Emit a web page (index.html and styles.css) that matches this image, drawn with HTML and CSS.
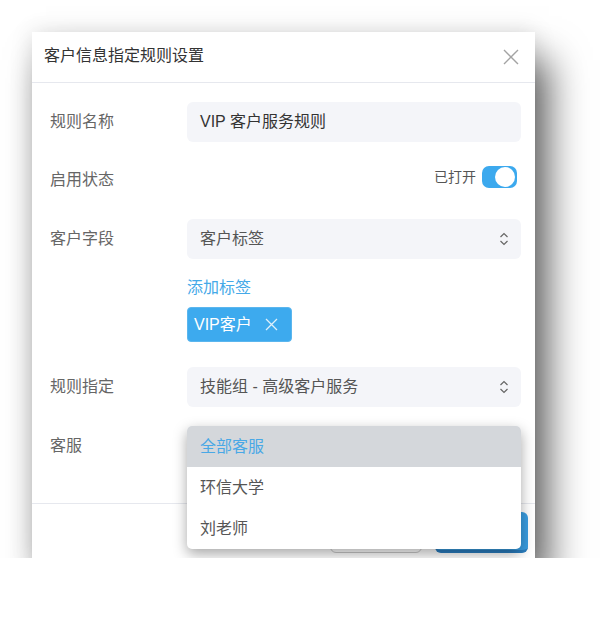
FILE: index.html
```html
<!DOCTYPE html>
<html lang="zh-CN">
<head>
    <meta charset="UTF-8">
    <title>客户信息指定规则设置</title>
    <link rel="stylesheet" href="styles.css">
</head>
<body>
    <div class="stage">
        <div class="dialog">
            <div class="dialog-header">
                <h2>客户信息指定规则设置</h2>
                <svg class="close-icon" width="16" height="16" viewBox="0 0 16 16">
                    <path d="M1 1 L15 15 M15 1 L1 15" stroke="#a3a3a3" stroke-width="1.4" fill="none"/>
                </svg>
            </div>

            <div class="dialog-body">
                <!-- Rule name -->
                <div class="form-row">
                    <label>规则名称</label>
                    <div class="field text-field">VIP 客户服务规则</div>
                </div>

                <!-- Switch -->
                <div class="form-row switch-row">
                    <label>启用状态</label>
                    <div class="switch-group">
                        <span class="switch-text">已打开</span>
                        <span class="switch"><span class="knob"></span></span>
                    </div>
                </div>

                <!-- Customer field -->
                <div class="form-row">
                    <label>客户字段</label>
                    <div class="field select-field">
                        <span>客户标签</span>
                        <svg class="chevrons" width="10" height="16" viewBox="0 0 10 16">
                            <path d="M1.5 6 L5 2.5 L8.5 6 M1.5 10 L5 13.5 L8.5 10" stroke="#666" stroke-width="1.2" fill="none"/>
                        </svg>
                    </div>
                </div>

                <div class="tag-block">
                    <a class="add-tag">添加标签</a>
                    <span class="tag">VIP客户
                        <svg width="13" height="13" viewBox="0 0 13 13">
                            <path d="M1 1 L12 12 M12 1 L1 12" stroke="#dff0fb" stroke-width="1.3" fill="none"/>
                        </svg>
                    </span>
                </div>

                <!-- Rule target -->
                <div class="form-row">
                    <label>规则指定</label>
                    <div class="field select-field">
                        <span>技能组 - 高级客户服务</span>
                        <svg class="chevrons" width="10" height="16" viewBox="0 0 10 16">
                            <path d="M1.5 6 L5 2.5 L8.5 6 M1.5 10 L5 13.5 L8.5 10" stroke="#666" stroke-width="1.2" fill="none"/>
                        </svg>
                    </div>
                </div>

                <!-- Agent with open menu -->
                <div class="form-row">
                    <label>客服</label>
                    <div class="menu-anchor">
                        <ul class="dropdown">
                            <li class="active">全部客服</li>
                            <li>环信大学</li>
                            <li>刘老师</li>
                        </ul>
                    </div>
                </div>
            </div>

            <div class="dialog-footer">
                <button class="btn-cancel">取消</button>
                <button class="btn-ok">确定</button>
            </div>
        </div>
    </div>
</body>
</html>
```

FILE: styles.css
```css
/* Basic reset */
* {
    margin: 0;
    padding: 0;
    box-sizing: border-box;
}

body {
    font-family: 'Liberation Sans', 'Noto Sans CJK SC', sans-serif;
    line-height: 1;
    background-color: #fff;
    color: #333;
}

.stage {
    padding: 32px 0 0 32px;
}

/* Dialog */
.dialog {
    position: relative;
    width: 503px;
    height: 526px;
    background-color: #fff;
    box-shadow: 14px 28px 36px rgba(0, 0, 0, 0.6), 0 0 22px rgba(0, 0, 0, 0.12);
}

.dialog-header {
    height: 51px;
    display: flex;
    align-items: center;
    justify-content: space-between;
    padding: 0 16px 3px 12px;
    border-bottom: 1px solid #e6e8ee;
}

.dialog-header h2 {
    font-size: 16px;
    font-weight: normal;
    color: #333;
}

.close-icon {
    margin-top: 3px;
}

.dialog-body {
    height: 420px;
    padding: 19px 14px 0 18px;
}

/* Rows */
.form-row {
    display: grid;
    grid-template-columns: 137px 1fr;
    align-items: center;
    height: 40px;
    margin-bottom: 19px;
}

.form-row label {
    font-size: 16px;
    color: #666;
}

.switch-row {
    margin-top: -1px;
}

.field {
    height: 40px;
    border-radius: 6px;
    background-color: #f4f5f9;
    display: flex;
    align-items: center;
    padding: 0 13px;
    font-size: 16px;
}

.text-field {
    color: #333;
}

.select-field {
    justify-content: space-between;
    color: #555;
}

.chevrons {
    margin-right: -1px;
}

/* Switch */
.switch-group {
    display: flex;
    align-items: center;
    justify-content: flex-end;
    gap: 6px;
    margin-bottom: 6px;
    margin-right: 4px;
}

.switch-text {
    font-size: 14px;
    color: #555;
}

.switch {
    width: 35px;
    height: 22px;
    border-radius: 7px;
    background-color: #3ca9ee;
    display: flex;
    justify-content: flex-end;
    align-items: center;
    padding: 1px 2px;
}

.knob {
    width: 20px;
    height: 20px;
    border-radius: 50%;
    background-color: #fff;
}

/* Tags */
.tag-block {
    margin-left: 137px;
    margin-bottom: 25px;
}

.add-tag {
    display: block;
    font-size: 16px;
    line-height: 20px;
    color: #45a9e8;
}

.tag {
    display: inline-flex;
    align-items: center;
    gap: 13px;
    margin-top: 9px;
    height: 35px;
    padding: 0 13px 0 6px;
    border-radius: 4px;
    border: 1px solid #5bb6ee;
    background-color: #3daaee;
    color: #fff;
    font-size: 16px;
}

/* Dropdown menu */
.menu-anchor {
    position: relative;
    height: 40px;
}

.dropdown {
    position: absolute;
    top: 0;
    left: 0;
    right: 0;
    list-style: none;
    background-color: #fff;
    border-radius: 5px;
    overflow: hidden;
    box-shadow: 0 5px 14px rgba(0, 0, 0, 0.35);
    z-index: 2;
}

.dropdown li {
    height: 41px;
    display: flex;
    align-items: center;
    padding-left: 13px;
    font-size: 16px;
    color: #555;
}

.dropdown li.active {
    background-color: #d4d7db;
    color: #49a8e6;
}

/* Footer */
.dialog-footer {
    height: 55px;
    border-top: 1px solid #e6e8ee;
    display: flex;
    justify-content: flex-end;
    gap: 13px;
    padding: 8px 7px 0 0;
}

.btn-cancel, .btn-ok {
    height: 41px;
    width: 92px;
    border-radius: 6px;
    font-size: 16px;
    font-family: inherit;
}

.btn-cancel {
    background-color: #fff;
    border: 1px solid #c8c8c8;
    color: #555;
}

.btn-ok {
    width: 93px;
    border: none;
    background-color: #3a9ee2;
    border-bottom: 3px solid #2a7ec0;
    color: #fff;
}
```
